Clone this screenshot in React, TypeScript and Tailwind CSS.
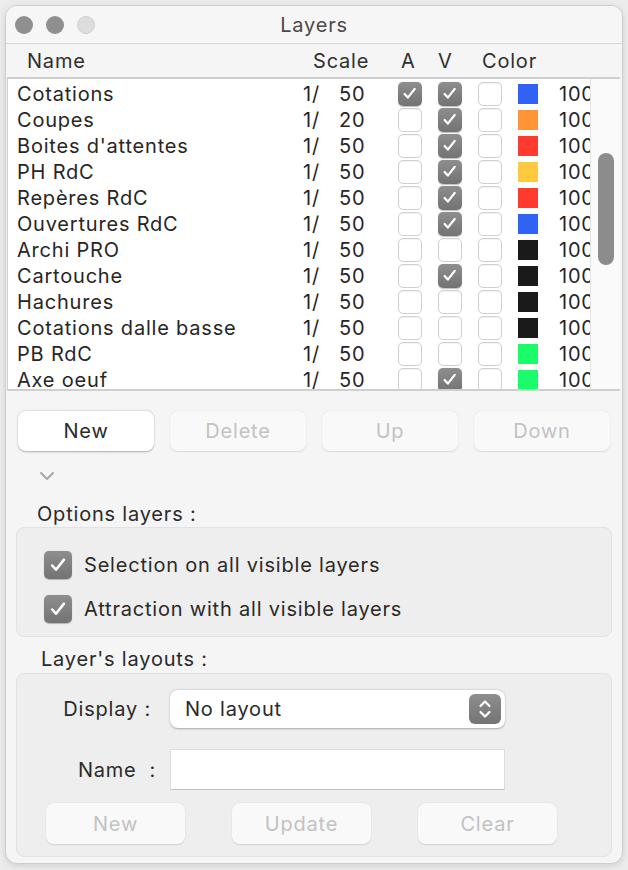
import React from "react";

type Row = { name: string; scale: string; a: boolean; v: boolean; color: string };

const rows: Row[] = [
  { name: "Cotations", scale: "50", a: true, v: true, color: "#2f62f5" },
  { name: "Coupes", scale: "20", a: false, v: true, color: "#ff9438" },
  { name: "Boites d'attentes", scale: "50", a: false, v: true, color: "#ff3b30" },
  { name: "PH RdC", scale: "50", a: false, v: true, color: "#ffc940" },
  { name: "Repères RdC", scale: "50", a: false, v: true, color: "#ff3b30" },
  { name: "Ouvertures RdC", scale: "50", a: false, v: true, color: "#2f62f5" },
  { name: "Archi PRO", scale: "50", a: false, v: false, color: "#1a1a1a" },
  { name: "Cartouche", scale: "50", a: false, v: true, color: "#1a1a1a" },
  { name: "Hachures", scale: "50", a: false, v: false, color: "#1a1a1a" },
  { name: "Cotations dalle basse", scale: "50", a: false, v: false, color: "#1a1a1a" },
  { name: "PB RdC", scale: "50", a: false, v: false, color: "#1cfc6a" },
  { name: "Axe oeuf", scale: "50", a: false, v: true, color: "#1cfc6a" },
];

function Check({ on, size = 24 }: { on: boolean; size?: number }) {
  if (on) {
    return (
      <div
        className="shrink-0 flex items-center justify-center rounded-[5px] bg-gradient-to-b from-[#8e8e8e] to-[#737373] shadow-[0_0.5px_1px_rgba(0,0,0,0.25)]"
        style={{ width: size, height: size }}
      >
        <svg width={size * 0.72} height={size * 0.72} viewBox="0 0 24 24" fill="none">
          <path d="M5 12.5l4.5 5L19 5.5" stroke="white" strokeWidth="3" strokeLinecap="round" strokeLinejoin="round" />
        </svg>
      </div>
    );
  }
  return (
    <div
      className="shrink-0 rounded-[5px] border border-[#cfcfcf] bg-white shadow-[inset_0_1px_1px_rgba(0,0,0,0.05)]"
      style={{ width: size, height: size }}
    />
  );
}

function Btn({ label, enabled, className }: { label: string; enabled?: boolean; className: string }) {
  return (
    <div
      className={
        "flex items-center justify-center rounded-[8px] text-[20px] " +
        (enabled
          ? "bg-white text-[#2a2a2a] shadow-[0_0.5px_2px_rgba(0,0,0,0.3)] "
          : "bg-[#f9f9f9] text-[#c2c2c2] shadow-[0_0.5px_1.5px_rgba(0,0,0,0.12)] ") +
        className
      }
    >
      {label}
    </div>
  );
}

export default function App() {
  return (
    <div
      className="w-[628px] h-[870px] bg-[#ececec] pt-[5px] px-[5px] tracking-[0.8px]"
      style={{ fontFamily: "Inter, 'Liberation Sans', sans-serif" }}
    >
      <div className="h-[859px] rounded-[12px] border border-[#cdcdcd] bg-[#f5f5f5] overflow-hidden flex flex-col shadow-[0_2px_6px_rgba(0,0,0,0.12)]">
        {/* Title bar */}
        <div className="relative h-[38px] flex items-center justify-center bg-[#f6f6f6] border-b border-[#d6d6d6]">
          <div className="absolute left-[9px] top-[10px] flex gap-[13px]">
            <div className="w-[18px] h-[18px] rounded-full bg-[#8f8f8f]" />
            <div className="w-[18px] h-[18px] rounded-full bg-[#8f8f8f]" />
            <div className="w-[18px] h-[18px] rounded-full bg-[#dddddd] border border-[#cfcfcf]" />
          </div>
          <div className="text-[20px] text-[#4a4a4a]">Layers</div>
        </div>

        {/* Header */}
        <div className="h-[33px] flex items-center text-[20px] text-[#2f2f2f] bg-[#f5f5f5]">
          <div className="w-[307px] pl-[21px]">Name</div>
          <div className="w-[88px]">Scale</div>
          <div className="w-[37px]">A</div>
          <div className="w-[44px]">V</div>
          <div>Color</div>
        </div>

        {/* Table */}
        <div className="ml-[1px] mr-[2px] h-[314px] border-t-2 border-b-2 border-l border-[#cfcfcf] bg-white flex">
          <div className="w-[582px] shrink-0 overflow-hidden pt-[2px]">
            {rows.map((r) => (
              <div key={r.name} className="h-[26px] flex items-center text-[20px] text-[#262626] whitespace-nowrap">
                <div className="w-[295px] shrink-0 pl-[9px]">{r.name}</div>
                <div className="w-[36px] shrink-0">1/</div>
                <div className="w-[59px] shrink-0">{r.scale}</div>
                <div className="w-[40px] shrink-0">
                  <Check on={r.a} />
                </div>
                <div className="w-[40px] shrink-0">
                  <Check on={r.v} />
                </div>
                <div className="w-[40px] shrink-0">
                  <Check on={false} />
                </div>
                <div className="w-[41px] shrink-0">
                  <div className="w-[20px] h-[20px]" style={{ background: r.color }} />
                </div>
                <div className="shrink-0">100</div>
              </div>
            ))}
          </div>
          <div className="flex-1 border-l border-[#e4e4e4] bg-[#fafafa] pt-[74px] pl-[7px]">
            <div className="w-[16px] h-[112px] rounded-full bg-[#8c8c8c]" />
          </div>
        </div>

        {/* Buttons */}
        <div className="flex gap-[16px] pl-[12px] pt-[20px]">
          <Btn label="New" enabled className="w-[136px] h-[40px]" />
          <Btn label="Delete" className="w-[136px] h-[40px]" />
          <Btn label="Up" className="w-[136px] h-[40px]" />
          <Btn label="Down" className="w-[136px] h-[40px]" />
        </div>
        <div className="pl-[33px] pt-[20px] h-[30px]">
          <svg width="16" height="10" viewBox="0 0 16 10" fill="none">
            <path d="M2 2l6 6 6-6" stroke="#a8a8a8" strokeWidth="2" strokeLinecap="round" strokeLinejoin="round" />
          </svg>
        </div>

        {/* Options layers */}
        <div className="pl-[31px] pt-[21px] text-[20px] text-[#2a2a2a] leading-[24px]">Options layers :</div>
        <div className="mx-[10px] mt-[1px] h-[110px] rounded-[8px] bg-[#eeeeee] border border-[#e2e2e2] pl-[27px] pt-[23px] flex flex-col gap-[16px]">
          <div className="flex items-center gap-[12px] text-[20px] text-[#2a2a2a] leading-[24px]">
            <Check on size={28} />
            <span>Selection on all visible layers</span>
          </div>
          <div className="flex items-center gap-[12px] text-[20px] text-[#2a2a2a] leading-[24px]">
            <Check on size={28} />
            <span>Attraction with all visible layers</span>
          </div>
        </div>

        {/* Layer's layouts */}
        <div className="pl-[35px] pt-[10px] text-[20px] text-[#2a2a2a] leading-[24px]">Layer's layouts :</div>
        <div className="mx-[10px] mt-[2px] h-[184px] rounded-[8px] bg-[#eeeeee] border border-[#e2e2e2] pt-[16px]">
          <div className="flex items-center">
            <div className="w-[134px] text-right text-[20px] text-[#2a2a2a]">Display :</div>
            <div className="ml-[19px] w-[335px] h-[38px] rounded-[8px] bg-white shadow-[0_0.5px_2px_rgba(0,0,0,0.3)] flex items-center justify-between pl-[15px] pr-[4px]">
              <span className="text-[20px] text-[#2a2a2a]">No layout</span>
              <div className="w-[32px] h-[30px] rounded-[6px] bg-gradient-to-b from-[#8e8e8e] to-[#747474] flex items-center justify-center">
                <svg width="16" height="26" viewBox="0 0 16 26" fill="none">
                  <path d="M3.5 10l4.5-4.5 4.5 4.5" stroke="white" strokeWidth="2.2" strokeLinecap="round" strokeLinejoin="round" />
                  <path d="M3.5 16l4.5 4.5 4.5-4.5" stroke="white" strokeWidth="2.2" strokeLinecap="round" strokeLinejoin="round" />
                </svg>
              </div>
            </div>
          </div>
          <div className="flex items-center mt-[21px]">
            <div className="w-[139px] text-right text-[20px] text-[#2a2a2a] whitespace-pre">Name  :</div>
            <div className="ml-[14px] w-[335px] h-[41px] bg-white border border-[#dedede] border-b-[#c4c4c4]" />
          </div>
          <div className="flex mt-[13px] pl-[29px] gap-[47px]">
            <Btn label="New" className="w-[139px] h-[41px]" />
            <Btn label="Update" className="w-[139px] h-[41px]" />
            <Btn label="Clear" className="w-[139px] h-[41px]" />
          </div>
        </div>
      </div>
    </div>
  );
}
